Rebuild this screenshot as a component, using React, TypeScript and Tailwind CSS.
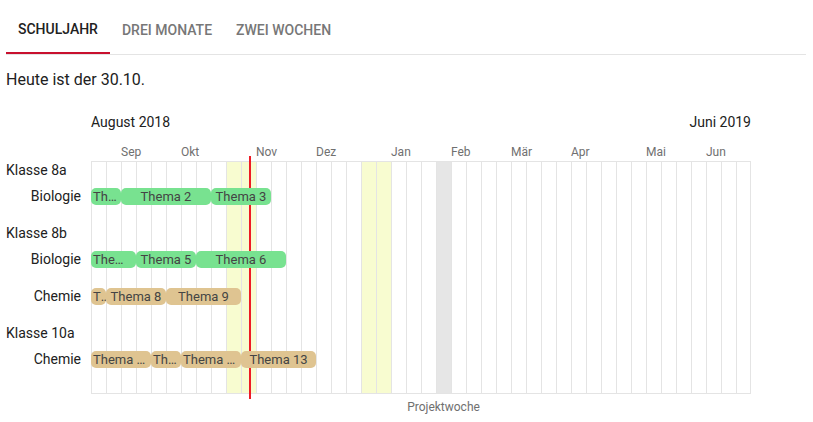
import React from 'react'

type Bar = { start: number; span: number; label: string }
type Row =
  | { kind: 'class'; label: string; first?: boolean }
  | { kind: 'subject'; label: string; color: string; bars: Bar[] }

const WEEKS = 44
const GREEN = 'bg-[#78e290]'
const TAN = 'bg-[#dfc491]'

const months = [
  { start: 2, label: 'Sep' },
  { start: 6, label: 'Okt' },
  { start: 11, label: 'Nov' },
  { start: 15, label: 'Dez' },
  { start: 20, label: 'Jan' },
  { start: 24, label: 'Feb' },
  { start: 28, label: 'Mär' },
  { start: 32, label: 'Apr' },
  { start: 37, label: 'Mai' },
  { start: 41, label: 'Jun' },
]

const holidays = [9, 10, 18, 19]
const projectWeek = 23

const rows: Row[] = [
  { kind: 'class', label: 'Klasse 8a', first: true },
  {
    kind: 'subject',
    label: 'Biologie',
    color: GREEN,
    bars: [
      { start: 0, span: 2, label: 'Thema 1' },
      { start: 2, span: 6, label: 'Thema 2' },
      { start: 8, span: 4, label: 'Thema 3' },
    ],
  },
  { kind: 'class', label: 'Klasse 8b' },
  {
    kind: 'subject',
    label: 'Biologie',
    color: GREEN,
    bars: [
      { start: 0, span: 3, label: 'Thema 4' },
      { start: 3, span: 4, label: 'Thema 5' },
      { start: 7, span: 6, label: 'Thema 6' },
    ],
  },
  {
    kind: 'subject',
    label: 'Chemie',
    color: TAN,
    bars: [
      { start: 0, span: 1, label: 'Thema 7' },
      { start: 1, span: 4, label: 'Thema 8' },
      { start: 5, span: 5, label: 'Thema 9' },
    ],
  },
  { kind: 'class', label: 'Klasse 10a' },
  {
    kind: 'subject',
    label: 'Chemie',
    color: TAN,
    bars: [
      { start: 0, span: 4, label: 'Thema 10' },
      { start: 4, span: 2, label: 'Thema 11' },
      { start: 6, span: 4, label: 'Thema 12' },
      { start: 10, span: 5, label: 'Thema 13' },
    ],
  },
]

function Tabs() {
  const tabs = ['Schuljahr', 'Drei Monate', 'Zwei Wochen']
  return (
    <div className="flex w-[800px] border-b border-[#e4e4e4]">
      {tabs.map((t, i) => (
        <div
          key={t}
          className={
            'flex h-[48px] items-center px-[12px] text-[14px] font-medium uppercase ' +
            (i === 0 ? 'text-[#212121] border-b-2 border-[#c8102e] -mb-px' : 'text-[#777777]')
          }
        >
          {t}
        </div>
      ))}
    </div>
  )
}

function rowHeight(r: Row) {
  if (r.kind === 'subject') return 'h-[37px]'
  return r.first ? 'h-[16px]' : 'h-[26px]'
}

export default function App() {
  return (
    <div className="p-[6px] font-['Roboto',sans-serif] text-[#212121]">
      <Tabs />
      <div className="mt-[14px] text-[16px] leading-[22px]">Heute ist der 30.10.</div>

      <div className="mt-[21px] ml-[85px] flex w-[660px] justify-between text-[14px] leading-[20px]">
        <span>August 2018</span>
        <span>Juni 2019</span>
      </div>

      <div className="mt-[12px] ml-[85px] grid h-[16px] grid-cols-[repeat(44,15px)] text-[12px] leading-[16px] text-[#707070]">
        {months.map((m) => (
          <span key={m.label} className="whitespace-nowrap" style={{ gridColumn: `${m.start + 1} / span 4` }}>
            {m.label}
          </span>
        ))}
      </div>

      <div className="mt-px flex">
        <div className="w-[85px] border-y border-transparent text-[14px]">
          {rows.map((r, i) => (
            <div
              key={i}
              className={
                rowHeight(r) +
                ' flex ' +
                (r.kind === 'class' ? 'items-end leading-[16px]' : 'items-center justify-end pr-[10px]')
              }
            >
              {r.label}
            </div>
          ))}
          <div className="h-[15px]" />
        </div>

        <div className="relative w-[660px] border-y border-[#e4e4e4]">
          <div className="absolute inset-0 flex">
            {Array.from({ length: WEEKS }, (_, i) => (
              <div
                key={i}
                className={
                  'w-[15px] shrink-0 border-l border-[#e4e4e4] ' +
                  (i === WEEKS - 1 ? 'border-r ' : '') +
                  (holidays.includes(i) ? 'bg-[#f8fcd0]' : i === projectWeek ? 'bg-[#e6e6e6]' : '')
                }
              />
            ))}
          </div>

          {/* today marker sits under the bars */}
          <div className="absolute left-[158px] top-[-6px] bottom-[-6px] w-[2px] bg-[#ee1c25]" />

          <div className="relative">
            {rows.map((r, i) =>
              r.kind === 'class' ? (
                <div key={i} className={rowHeight(r)} />
              ) : (
                <div key={i} className="grid h-[37px] grid-cols-[repeat(44,15px)] items-center">
                  {r.bars.map((b) => (
                    <div
                      key={b.label}
                      className={
                        r.color +
                        ' h-[17px] truncate rounded-[5px] px-[2px] text-center text-[13px] leading-[17px] text-[#444444]'
                      }
                      style={{ gridColumn: `${b.start + 1} / span ${b.span}` }}
                    >
                      {b.label}
                    </div>
                  ))}
                </div>
              )
            )}
            <div className="h-[15px]" />
          </div>
        </div>
      </div>

      <div className="ml-[85px] mt-[5px] grid grid-cols-[repeat(44,15px)] text-[12px] leading-[16px] text-[#707070]">
        <div className="flex justify-center whitespace-nowrap" style={{ gridColumn: `${projectWeek + 1} / span 1` }}>
          Projektwoche
        </div>
      </div>
    </div>
  )
}
